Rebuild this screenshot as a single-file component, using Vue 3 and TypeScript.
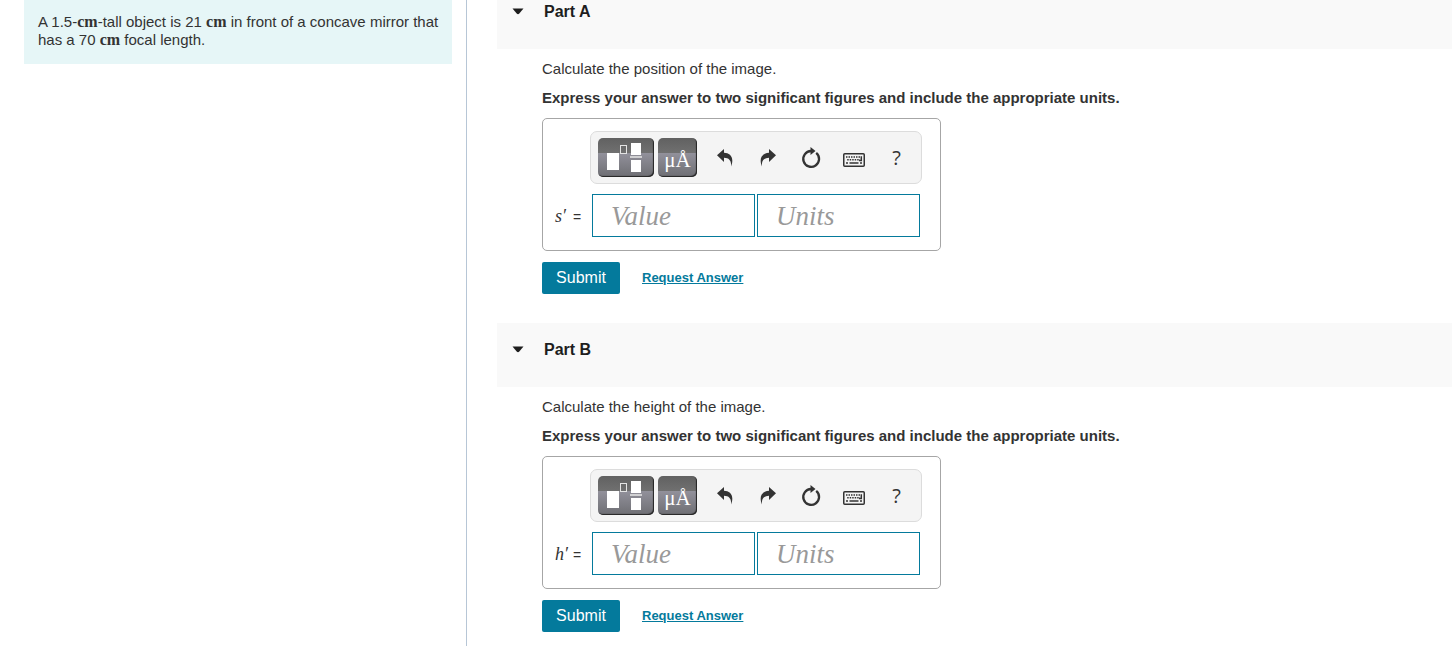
<script setup lang="ts">
import { reactive } from 'vue'

interface Part {
  id: string
  title: string
  question: string
  symbol: string
  value: string
  units: string
  open: boolean
}

const parts = reactive<Part[]>([
  { id: 'a', title: 'Part A', question: 'Calculate the position of the image.', symbol: 's', value: '', units: '', open: true },
  { id: 'b', title: 'Part B', question: 'Calculate the height of the image.', symbol: 'h', value: '', units: '', open: true },
])

function reset(part: Part): void {
  part.value = ''
  part.units = ''
}
</script>

<template>
  <div class="page">
    <aside class="side">
      <p class="problem">
        A 1.5-<span class="unit">cm</span>-tall object is 21 <span class="unit">cm</span> in front of a concave mirror that has a 70 <span class="unit">cm</span> focal length.
      </p>
    </aside>
    <main class="main">
      <section v-for="part in parts" :key="part.id" class="part">
        <header class="part-head">
          <button class="toggle" type="button" :aria-expanded="part.open" :aria-label="'Toggle ' + part.title" @click="part.open = !part.open">
            <svg width="12" height="9" viewBox="0 0 12 9"><path d="M0.5 0.5H11.5L7.3 5.6Q6 6.8 4.7 5.6Z" fill="#1e1e1e" /></svg>
          </button>
          <h2>{{ part.title }}</h2>
        </header>
        <form v-show="part.open" class="body" @submit.prevent>
          <p class="question">{{ part.question }}</p>
          <p class="hint">Express your answer to two significant figures and include the appropriate units.</p>
          <div class="answer">
            <div class="toolbar" role="toolbar">
              <button type="button" class="dark templates" aria-label="Templates">
                <svg width="56" height="39" viewBox="0 0 56 39">
                  <g fill="#fff">
                    <rect x="9" y="15" width="12" height="17" />
                    <rect x="33" y="5" width="10" height="12" />
                    <rect x="33" y="22" width="10" height="12" />
                  </g>
                  <rect x="32" y="18" width="12" height="2" fill="#d0d0d2" />
                  <rect x="22.5" y="7.5" width="6" height="8" fill="none" stroke="#e4e4e4" />
                </svg>
              </button>
              <button type="button" class="dark symbols" aria-label="Symbols">μÅ</button>
              <button type="button" class="tool first" aria-label="Undo">
                <svg width="16" height="18" viewBox="0 0 16 18"><path d="M0 6.3L7 0V3.8C13.4 4 17.6 8.8 14 17.5C14.6 11.8 12.4 8.9 7 8.7V13Z" fill="#333" /></svg>
              </button>
              <button type="button" class="tool" aria-label="Redo">
                <svg width="16" height="18" viewBox="0 0 16 18"><path d="M16 6.3L9 0V3.8C2.6 4 -1.6 8.8 2 17.5C1.4 11.8 3.6 8.9 9 8.7V13Z" fill="#333" /></svg>
              </button>
              <button type="button" class="tool" aria-label="Reset" @click="reset(part)">
                <svg width="20" height="22" viewBox="0 0 20 22"><path d="M15.2 5.8A7.9 7.9 0 1 1 10 4" fill="none" stroke="#333" stroke-width="2.3" /><path d="M9.5 0L14.5 4L9.5 8Z" fill="#333" /></svg>
              </button>
              <button type="button" class="tool" aria-label="Keyboard">
                <svg class="keys" width="22" height="14" viewBox="0 0 22 14">
                  <rect x="0.75" y="0.75" width="20.5" height="12.5" rx="1" fill="none" stroke="#333" stroke-width="1.5" />
                  <g fill="none" stroke="#333" stroke-width="1.5">
                    <path d="M3 4H17" stroke-dasharray="1.5 1" />
                    <path d="M4.2 6.8H17" stroke-dasharray="1.5 1" />
                    <path d="M18.3 3.2V7.5H16M3 10H5M6.5 10H15.5M17 10H19" />
                  </g>
                </svg>
              </button>
              <button type="button" class="tool help" aria-label="Help">?</button>
            </div>
            <label class="symbol" :for="'value-' + part.id"><i>{{ part.symbol }}′</i> =</label>
            <div class="fields">
              <input :id="'value-' + part.id" v-model="part.value" type="text" placeholder="Value">
              <input v-model="part.units" type="text" placeholder="Units" aria-label="Units">
            </div>
          </div>
          <div class="actions">
            <button class="submit" type="submit">Submit</button>
            <a href="#">Request Answer</a>
          </div>
        </form>
      </section>
    </main>
  </div>
</template>

<style>
body {
  margin: 0;
  background: #fff;
  overflow: hidden;
}
</style>

<style scoped>
* {
  box-sizing: border-box;
}
.page {
  display: flex;
  min-height: 100vh;
  font-family: "Liberation Sans", Arial, sans-serif;
  font-size: 15px;
  line-height: 18px;
  color: #333;
}
p,
h2 {
  margin: 0;
}
button {
  font: inherit;
  border: 0;
  padding: 0;
  background: none;
  cursor: pointer;
}
svg {
  display: block;
}
.side {
  flex: 0 0 467px;
  padding: 0 14px 0 24px;
  border-right: 1px solid #b7c6d6;
}
.problem {
  padding: 13px 8px 15px 14px;
  background: #e6f6f7;
}
.unit {
  font-family: "Liberation Serif", "Times New Roman", serif;
  font-size: 16px;
  font-weight: bold;
}
.main {
  flex: 1;
  min-width: 0;
  margin-left: 30px;
}
.part:first-child {
  margin-top: -15px;
}
.part-head {
  display: flex;
  align-items: center;
  height: 64px;
  padding: 0 15px 10px;
  background: #f9f9f9;
}
.toggle {
  width: 12px;
  margin-right: 20px;
}
h2 {
  font-size: 16px;
  line-height: 20px;
  color: #1e1e1e;
}
.body {
  padding: 11px 0 29px 45px;
}
.hint {
  margin: 11px 0;
  font-weight: bold;
}
.answer {
  display: inline-grid;
  grid-template-columns: auto 332px;
  row-gap: 10px;
  padding: 12px 18px 13px 12px;
  border: 1px solid #a6a6a6;
  border-radius: 5px;
  vertical-align: top;
}
.toolbar {
  grid-column: 2;
  display: flex;
  align-items: center;
  height: 53px;
  padding-left: 7px;
  border: 1px solid #dcdcdc;
  border-radius: 7px;
  background: #f4f4f4;
}
.dark {
  flex: none;
  height: 39px;
  border-radius: 5px;
  background: linear-gradient(#616161, #707070 38%, #92919b 38%, #6e6e73);
  box-shadow: inset -1px -1px 1px #222;
}
.templates {
  width: 56px;
}
.symbols {
  width: 39px;
  margin-left: 4px;
  padding-top: 4px;
  font-family: "Liberation Serif", "Times New Roman", serif;
  font-size: 21px;
  color: #fff;
}
.tool {
  display: flex;
  flex: none;
  align-items: center;
  justify-content: center;
  width: 43px;
  height: 39px;
  color: #333;
}
.first {
  margin-left: 6px;
}
.keys {
  margin-top: 4px;
}
.help {
  font-family: "Open Sans", sans-serif;
  font-size: 20px;
}
.symbol {
  align-self: center;
  padding: 2px 9px 0 0;
  font-size: 14px;
  white-space: nowrap;
}
.symbol i {
  display: inline-block;
  min-width: 14px;
  font-family: "Liberation Serif", "Times New Roman", serif;
  font-size: 18px;
}
.fields {
  display: flex;
  gap: 2px;
  padding: 0 2px;
}
input {
  flex: 1;
  min-width: 0;
  height: 43px;
  padding: 2px 18px 0;
  border: 1px solid #047a9c;
  border-radius: 0;
  background: #fff;
  font: italic 27px "Liberation Serif", "Times New Roman", serif;
  color: #333;
}
input::placeholder {
  color: #999;
  opacity: 1;
}
.actions {
  display: flex;
  align-items: center;
  gap: 22px;
  margin-top: 11px;
}
.submit {
  width: 78px;
  height: 32px;
  border-radius: 2px;
  background: #047a9c;
  font-size: 16px;
  color: #fff;
}
a {
  font-size: 13px;
  font-weight: bold;
  color: #047a9c;
}
</style>
